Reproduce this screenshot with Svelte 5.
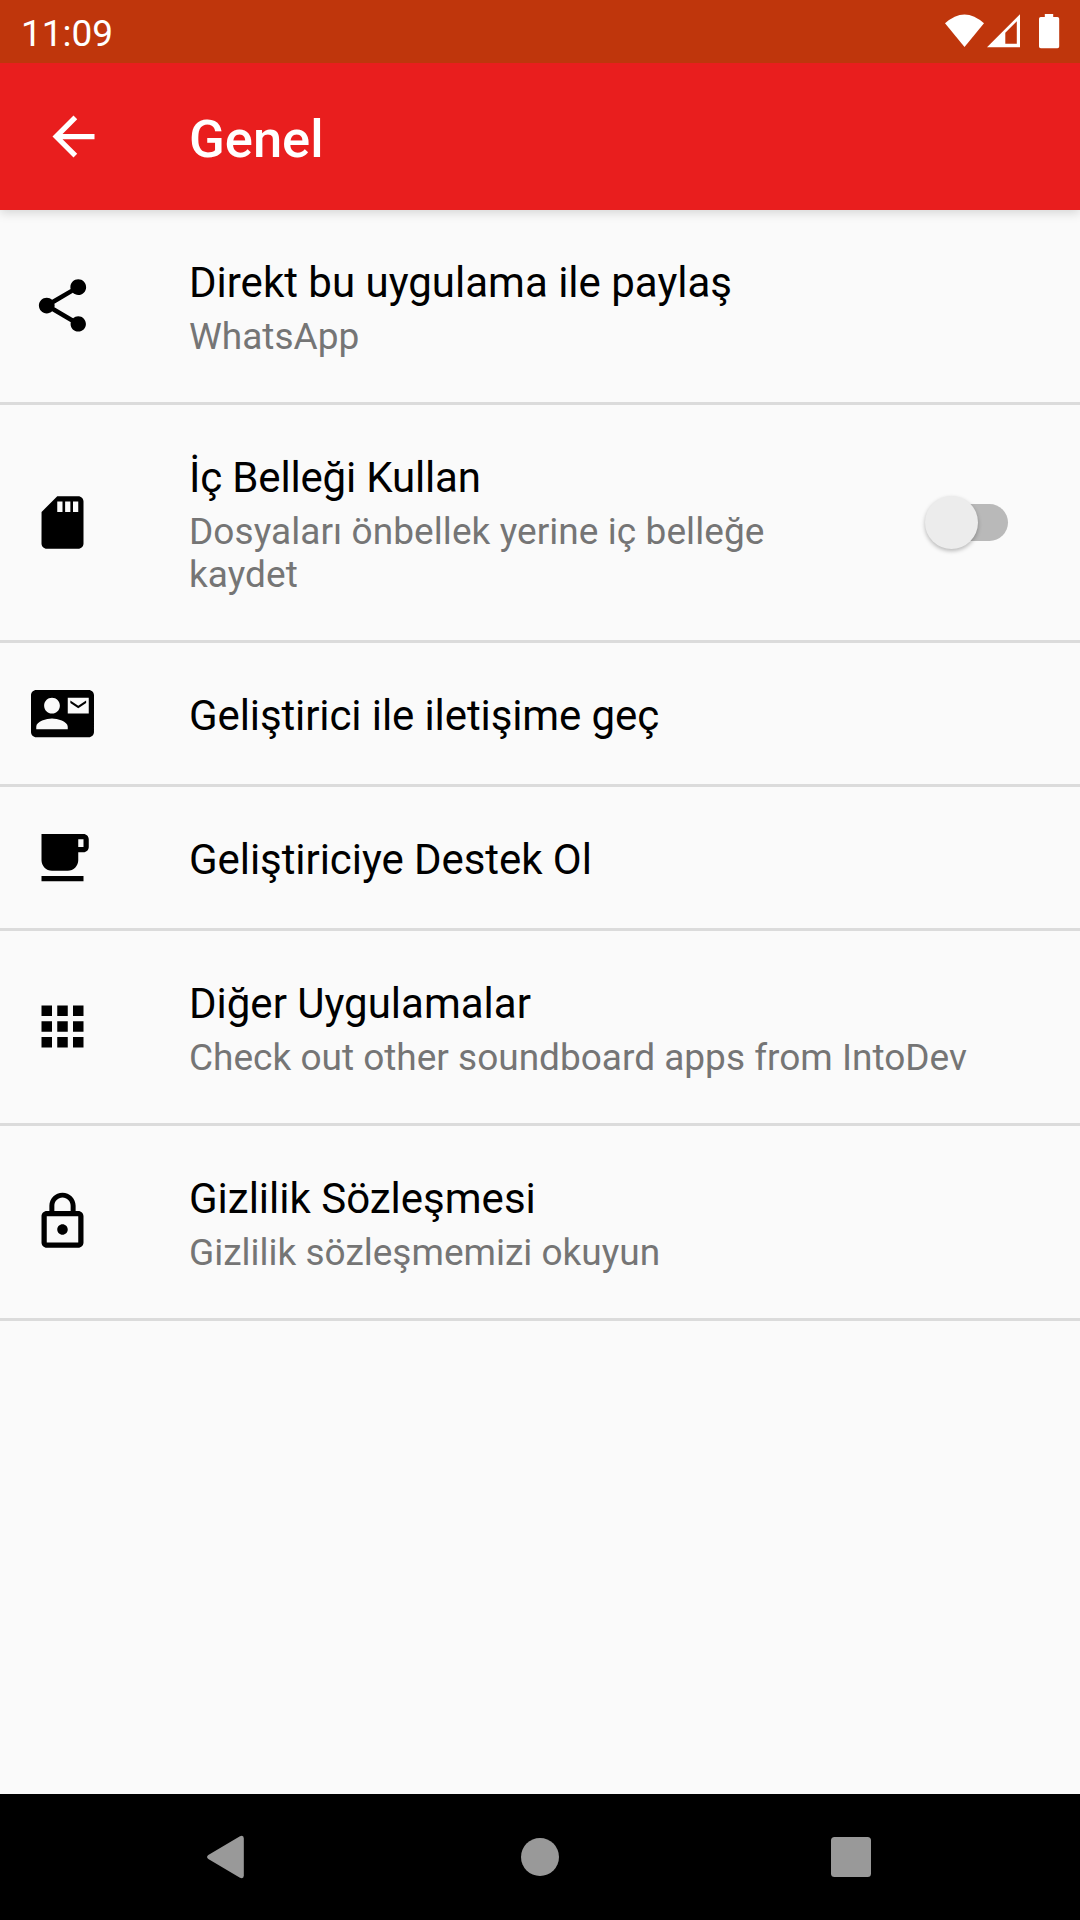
<script>
  const rows = [
    {
      title: 'Direkt bu uygulama ile paylaş',
      summary: 'WhatsApp',
      icon: 'M18 16.08c-.76 0-1.44.3-1.96.77L8.91 12.7c.05-.23.09-.46.09-.7s-.04-.47-.09-.7l7.05-4.11c.54.5 1.25.81 2.04.81 1.66 0 3-1.34 3-3s-1.34-3-3-3-3 1.34-3 3c0 .24.04.47.09.7L8.04 9.81C7.5 9.31 6.79 9 6 9c-1.66 0-3 1.34-3 3s1.34 3 3 3c.79 0 1.5-.31 2.04-.81l7.12 4.16c-.05.21-.08.43-.08.65 0 1.61 1.31 2.92 2.92 2.92s2.92-1.31 2.92-2.92-1.31-2.92-2.92-2.92z'
    },
    {
      title: 'İç Belleği Kullan',
      summary: 'Dosyaları önbellek yerine iç belleğe kaydet',
      toggle: true,
      icon: 'M18 2h-8L4.02 8 4 20c0 1.1.9 2 2 2h12c1.1 0 2-.9 2-2V4c0-1.1-.9-2-2-2zm-6 6h-2V4h2v4zm3 0h-2V4h2v4zm3 0h-2V4h2v4z'
    },
    {
      title: 'Geliştirici ile iletişime geç',
      icon: 'M21 8V7l-3 2-3-2v1l3 2 3-2zm1-5H2C.9 3 0 3.9 0 5v14c0 1.1.9 2 2 2h20c1.1 0 1.99-.9 1.99-2L24 5c0-1.100-.9-2-2-2zM8 6c1.660 0 3 1.340 3 3s-1.340 3-3 3-3-1.340-3-3 1.340-3 3-3zm6 12H2v-1c0-2 4-3.100 6-3.100s6 1.100 6 3.100v1zm8-6h-8V6h8v6z'
    },
    {
      title: 'Geliştiriciye Destek Ol',
      icon: 'M20 3H4v10c0 2.210 1.790 4 4 4h6c2.210 0 4-1.790 4-4v-3h2c1.110 0 2-.89 2-2V5c0-1.110-.89-2-2-2zm0 5h-2V5h2v3zM4 19h16v2H4z'
    },
    {
      title: 'Diğer Uygulamalar',
      summary: 'Check out other soundboard apps from IntoDev',
      icon: 'M4 8h4V4H4v4zm6 12h4v-4h-4v4zm-6 0h4v-4H4v4zm0-6h4v-4H4v4zm6 0h4v-4h-4v4zm6-10v4h4V4h-4zm-6 4h4V4h-4v4zm6 6h4v-4h-4v4zm0 6h4v-4h-4v4z'
    },
    {
      title: 'Gizlilik Sözleşmesi',
      summary: 'Gizlilik sözleşmemizi okuyun',
      icon: 'M12 17c1.100 0 2-.9 2-2s-.9-2-2-2-2 .9-2 2 .9 2 2 2zm6-9h-1V6c0-2.760-2.240-5-5-5S7 3.240 7 6v2H6c-1.100 0-2 .9-2 2v10c0 1.100.9 2 2 2h12c1.100 0 2-.9 2-2V10c0-1.100-.9-2-2-2zM8.900 6c0-1.710 1.390-3.100 3.100-3.100s3.100 1.390 3.100 3.100v2H8.900V6zM18 20H6V10h12v10z'
    }
  ];

  let checked = $state(false);
</script>

<div class="screen">
  <div class="status">
    <span class="time">11:09</span>
    <svg width="120" height="36" viewBox="0 0 120 36" fill="#fff">
      <path d="M0 9.300Q19.500-8.500 39 9.300L19.500 33z" />
      <path fill-rule="evenodd" d="M42 33.200L75 0.200V33.200zM60.300 18.700V29.800H71.800V7.200z" />
      <path d="M99.800 0h8.400v3h4.200q1.800 0 1.800 1.800v27.600q0 1.800-1.800 1.800H95.800q-1.800 0-1.800-1.800V4.800Q94 3 95.800 3h4z" />
    </svg>
  </div>

  <header class="appbar">
    <svg class="back" width="63" height="63" viewBox="0 0 24 24" fill="#fff">
      <path d="M20 11H7.830l5.590-5.590L12 4l-8 8 8 8 1.410-1.410L7.830 13H20v-2z" />
    </svg>
    <h1>Genel</h1>
  </header>

  <main>
    {#each rows as row}
      <section class="row">
        <svg class="icon" class:raised={row.summary && !row.toggle} width="63" height="63" viewBox="0 0 24 24">
          <path fill-rule="evenodd" d={row.icon} />
        </svg>
        <div class="text">
          <div class="title">{row.title}</div>
          {#if row.summary}<div class="summary">{row.summary}</div>{/if}
        </div>
        {#if row.toggle}
          <button
            class="switch"
            class:on={checked}
            role="switch"
            aria-checked={checked}
            aria-label={row.title}
            onclick={() => (checked = !checked)}
          ><span class="thumb"></span></button>
        {/if}
      </section>
    {/each}
  </main>

  <nav>
    <svg width="1080" height="126" viewBox="0 0 1080 126" fill="#999">
      <path d="M208.300 61L239.500 42.500Q243.800 40.500 243.800 44.500V81.500Q243.800 85.500 239.500 83.500L208.300 65Q205.800 63 208.300 61z" />
      <circle cx="540" cy="63" r="19" />
      <rect x="831" y="43" width="40" height="40" rx="3.500" />
    </svg>
  </nav>
</div>

<style>
  :global(body) {
    margin: 0;
    background: #fafafa;
  }
  .screen {
    width: 1080px;
    height: 1920px;
    display: flex;
    flex-direction: column;
    overflow: hidden;
    background: #fafafa;
    font-family: Roboto, sans-serif;
    color: #000;
  }
  svg {
    display: block;
    flex: none;
  }
  .status {
    height: 63px;
    flex: none;
    box-sizing: border-box;
    display: flex;
    justify-content: space-between;
    align-items: flex-start;
    padding: 14px 15px 0 21px;
    background: #bf360c;
    z-index: 2;
  }
  .time {
    margin-top: -2px;
    font-size: 37px;
    line-height: 43px;
    color: #fff;
  }
  .appbar {
    height: 147px;
    flex: none;
    display: flex;
    align-items: center;
    background: #e91e1e;
    box-shadow: 0 3px 10px rgba(0, 0, 0, 0.15);
    z-index: 1;
  }
  .back {
    margin-left: 42px;
  }
  h1 {
    margin: 5px 0 0 84px;
    font-size: 52.5px;
    line-height: 62px;
    font-weight: 500;
    color: #fff;
  }
  main {
    flex: 1;
  }
  .row {
    display: flex;
    align-items: center;
    padding: 0 72px 0 31px;
    border-bottom: 3px solid #dbdbdb;
  }
  .icon {
    margin-right: 95px;
  }
  .icon.raised {
    margin-bottom: 1px;
  }
  .text {
    flex: 1;
    padding: 48px 0 43px;
  }
  .title {
    font-size: 42px;
    line-height: 50px;
  }
  .row:nth-child(2) .title {
    letter-spacing: -0.17px;
  }
  .row:nth-child(3) .title {
    letter-spacing: -0.1px;
  }
  .row:nth-child(4) .title {
    letter-spacing: -0.06px;
  }
  .summary {
    margin: 7px 0 1px;
    font-size: 37px;
    line-height: 43px;
    color: #757575;
  }
  .row:nth-child(2) .summary {
    letter-spacing: 0.07px;
  }
  .switch {
    flex: none;
    width: 83px;
    height: 53px;
    margin-left: 80px;
    padding: 0;
    border: 0;
    display: flex;
    align-items: center;
    background: none;
    isolation: isolate;
    position: relative;
  }
  .switch::before {
    content: '';
    position: absolute;
    z-index: -1;
    inset: 8px 0 8px 8px;
    border-radius: 19px;
    background: #b9b9b9;
  }
  .thumb {
    width: 53px;
    height: 53px;
    border-radius: 50%;
    background: #ececec;
    box-shadow: 0 2px 4px rgba(0, 0, 0, 0.27);
  }
  .switch.on {
    justify-content: flex-end;
  }
  nav {
    height: 126px;
    flex: none;
    background: #000;
  }
</style>
